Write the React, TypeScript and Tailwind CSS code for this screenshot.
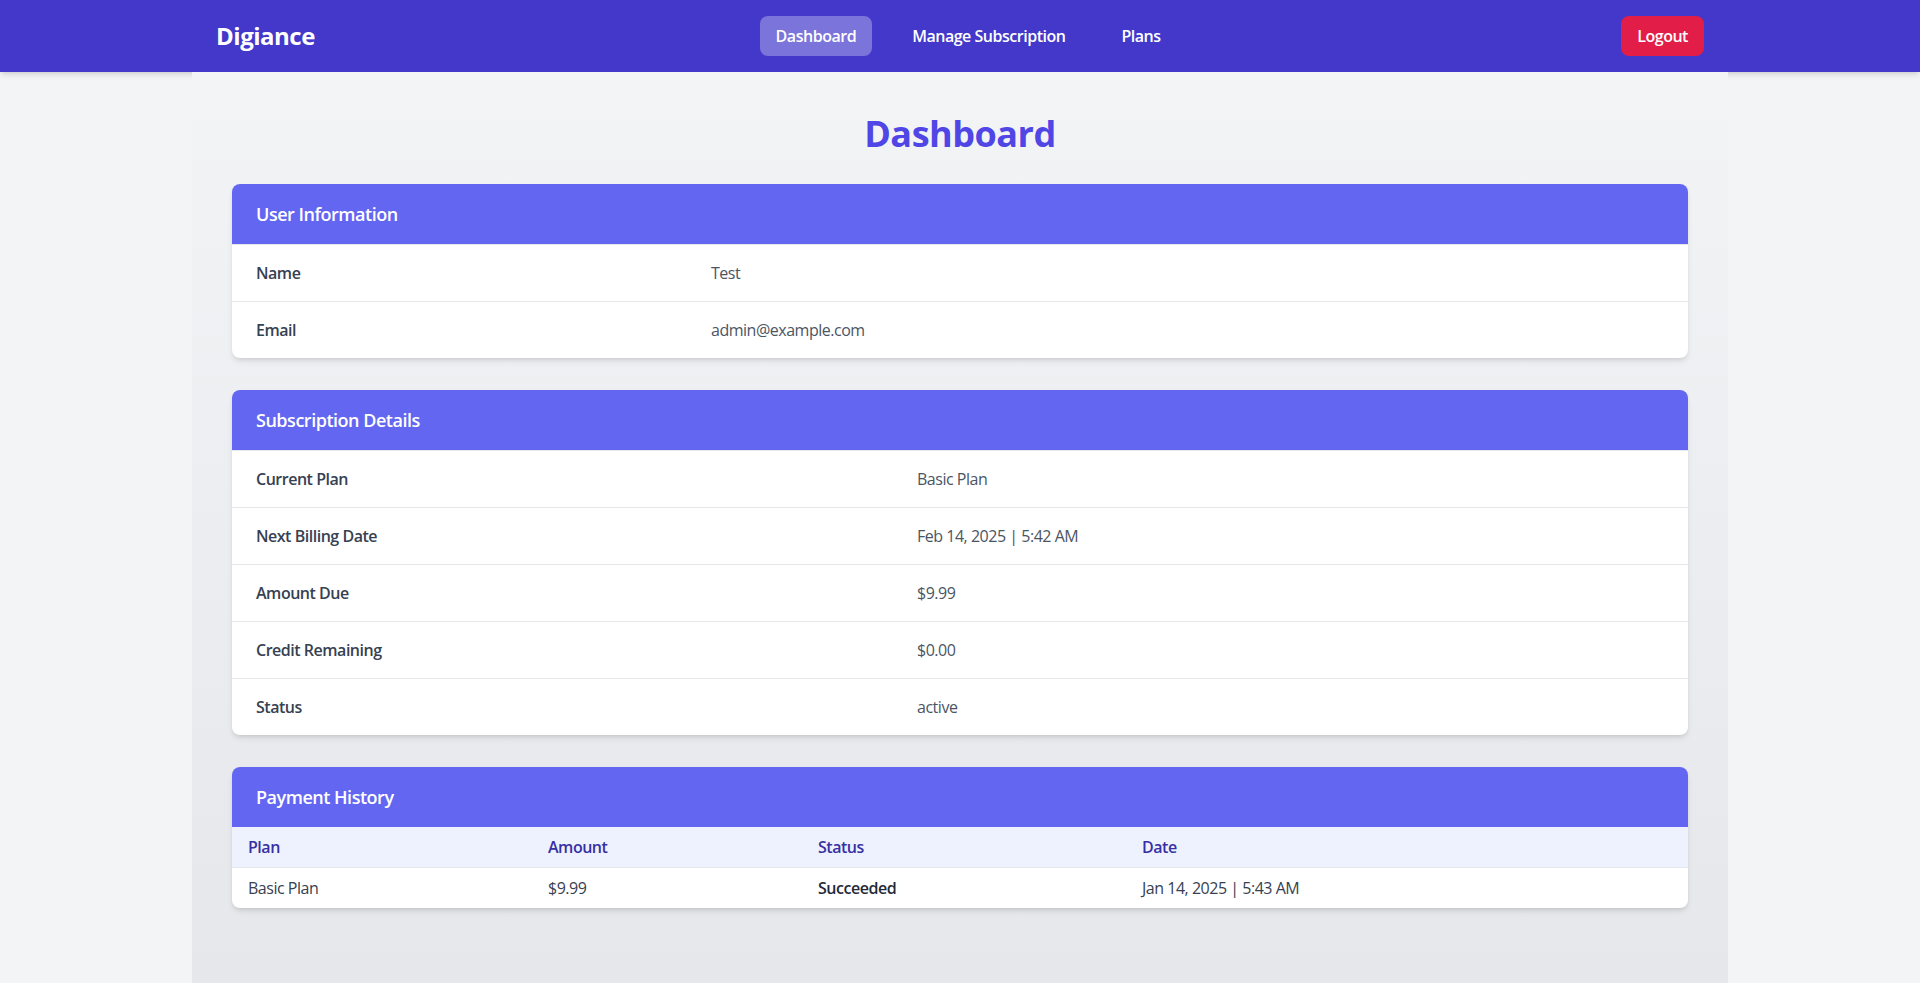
import React from "react";

const userRows = [
  ["Name", "Test"],
  ["Email", "admin@example.com"],
];

const subRows = [
  ["Current Plan", "Basic Plan"],
  ["Next Billing Date", "Feb 14, 2025 | 5:42 AM"],
  ["Amount Due", "$9.99"],
  ["Credit Remaining", "$0.00"],
  ["Status", "active"],
];

function Card({ title, bordered, children }: { title: string; bordered?: boolean; children: React.ReactNode }) {
  return (
    <div className="bg-white rounded-lg shadow-md overflow-hidden mb-8">
      <div className={`bg-[#6366f1] px-6 py-4 ${bordered ? "border-b border-[#e5e7eb]" : ""}`}>
        <h2 className="text-lg leading-7 font-semibold text-white">{title}</h2>
      </div>
      {children}
    </div>
  );
}

function KVTable({ rows, labelWidth }: { rows: string[][]; labelWidth: string }) {
  return (
    <div>
      {rows.map(([k, v], i) => (
        <div
          key={k}
          className={`flex ${i < rows.length - 1 ? "border-b border-[#e5e7eb]" : ""}`}
        >
          <div className={`${labelWidth} shrink-0 px-6 py-4 text-base leading-6 font-semibold text-[#374151]`}>{k}</div>
          <div className="flex-1 px-6 py-4 text-base leading-6 text-[#4b5563]">{v}</div>
        </div>
      ))}
    </div>
  );
}

export default function App() {
  return (
    <div className="min-h-screen bg-[#f3f4f6] font-['Open_Sans',sans-serif] tracking-[-0.03em]">
      <nav className="bg-[#4338ca] shadow-md">
        <div className="max-w-[1536px] mx-auto px-6 h-[72px] flex items-center justify-between">
          <div className="text-2xl font-bold text-white">Digiance</div>
          <div className="flex items-center gap-6">
            <a className="px-4 py-2 rounded-lg bg-white/30 text-white font-semibold text-base leading-6">Dashboard</a>
            <a className="px-4 py-2 rounded-lg text-white font-semibold text-base leading-6">Manage Subscription</a>
            <a className="px-4 py-2 rounded-lg text-white font-semibold text-base leading-6">Plans</a>
          </div>
          <button className="px-4 py-2 rounded-lg bg-[#e11d48] text-white font-semibold text-base leading-6">Logout</button>
        </div>
      </nav>
      <main className="max-w-[1536px] mx-auto px-10 pt-[42px] pb-10 min-h-[calc(100vh-72px)] bg-gradient-to-b from-[#f3f4f6] to-[#e5e7eb]">
        <h1 className="text-4xl leading-10 font-bold text-[#4f46e5] text-center mb-[30px]">Dashboard</h1>

        <Card title="User Information" bordered>
          <KVTable rows={userRows} labelWidth="w-[455px]" />
        </Card>

        <Card title="Subscription Details" bordered>
          <KVTable rows={subRows} labelWidth="w-[661px]" />
        </Card>

        <Card title="Payment History">
          <table className="w-full text-left table-fixed">
            <thead className="bg-[#eef2ff]">
              <tr className="border-b border-[#e5e7eb]">
                <th className="w-[300px] px-4 py-2 font-semibold text-[#3730a3] text-base leading-6">Plan</th>
                <th className="w-[270px] px-4 py-2 font-semibold text-[#3730a3] text-base leading-6">Amount</th>
                <th className="w-[324px] px-4 py-2 font-semibold text-[#3730a3] text-base leading-6">Status</th>
                <th className="px-4 py-2 font-semibold text-[#3730a3] text-base leading-6">Date</th>
              </tr>
            </thead>
            <tbody>
              <tr>
                <td className="px-4 py-2 text-[#374151] text-base leading-6">Basic Plan</td>
                <td className="px-4 py-2 text-[#374151] text-base leading-6">$9.99</td>
                <td className="px-4 py-2 text-[#1f2937] font-semibold text-base leading-6">Succeeded</td>
                <td className="px-4 py-2 text-[#374151] text-base leading-6">Jan 14, 2025 | 5:43 AM</td>
              </tr>
            </tbody>
          </table>
        </Card>
      </main>
    </div>
  );
}
